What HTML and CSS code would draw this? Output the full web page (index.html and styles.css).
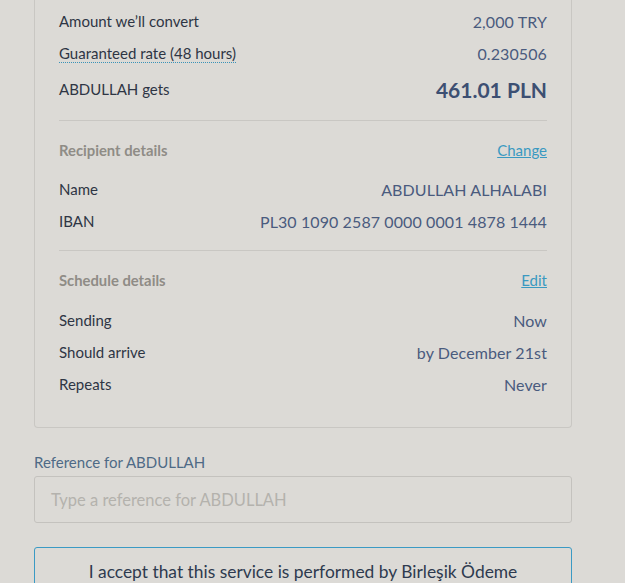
FILE: index.html
```html
<!DOCTYPE html>
<html>
<head>
<meta charset="utf-8">
<link rel="stylesheet" href="styles.css">
</head>
<body>
<div class="page">
  <div class="card">
    <div class="row"><span class="label">Amount we’ll convert</span><span class="value">2,000 TRY</span></div>
    <div class="row"><span class="label dotted">Guaranteed rate (48 hours)</span><span class="value">0.230506</span></div>
    <div class="row big"><span class="label">ABDULLAH gets</span><span class="value strong">461.01 PLN</span></div>
    <hr class="divider">
    <div class="row head"><span class="heading">Recipient details</span><a class="link" href="#">Change</a></div>
    <div class="row"><span class="label">Name</span><span class="value">ABDULLAH ALHALABI</span></div>
    <div class="row"><span class="label">IBAN</span><span class="value">PL30 1090 2587 0000 0001 4878 1444</span></div>
    <hr class="divider second">
    <div class="row head second"><span class="heading">Schedule details</span><a class="link" href="#">Edit</a></div>
    <div class="row"><span class="label">Sending</span><span class="value">Now</span></div>
    <div class="row"><span class="label">Should arrive</span><span class="value">by December 21st</span></div>
    <div class="row"><span class="label">Repeats</span><span class="value">Never</span></div>
  </div>
  <label class="ref-label">Reference for ABDULLAH</label>
  <div class="input"><span class="placeholder">Type a reference for ABDULLAH</span></div>
  <div class="accept">I accept that this service is performed by Birleşik Ödeme</div>
</div>
</body>
</html>
```
FILE: styles.css
```css
html, body {
  margin: 0;
  padding: 0;
  background: #dcdad6;
}
body {
  font-family: Lato, "Open Sans", sans-serif;
  color: #2e3544;
}
.page {
  width: 538px;
  margin-left: 34px;
}
.card {
  border: 1px solid #c9c7c3;
  border-top: 0;
  border-radius: 0 0 4px 4px;
  padding: 5px 24px 27px 24px;
}
.row {
  display: flex;
  justify-content: space-between;
  align-items: center;
  height: 32px;
  font-size: 15px;
}
.row.big {
  height: 40px;
}
.label {
  color: #2e3544;
}
.dotted {
  border-bottom: 1px dotted #3a93b8;
  line-height: 18px;
}
.value {
  color: #4a5b7e;
  font-size: 16px;
  letter-spacing: 0.1px;
}
.value.strong {
  font-size: 21px;
  font-weight: 700;
  color: #3d4f72;
  letter-spacing: 0;
}
.divider {
  border: 0;
  border-top: 1px solid #c9c7c3;
  margin: 11px 0 13px 0;
}
.divider.second {
  margin-top: 13px;
}
.row.head {
  margin-bottom: 7px;
}
.row.head.second {
  margin-bottom: 8px;
}
.heading {
  font-weight: 700;
  color: #8f8c86;
  font-size: 14.8px;
}
.link {
  color: #3a99c1;
  text-decoration: underline;
  font-size: 15px;
}
.ref-label {
  display: block;
  margin-top: 26px;
  font-size: 15px;
  color: #4e6a86;
  line-height: 16px;
}
.input {
  margin-top: 6px;
  height: 45px;
  border: 1px solid #c4c2be;
  border-radius: 3px;
  display: flex;
  align-items: center;
  padding-left: 16px;
}
.placeholder {
  color: #b4b2ad;
  font-size: 16.5px;
}
.accept {
  margin-top: 24px;
  border: 1px solid #3b9ac4;
  border-radius: 3px;
  text-align: center;
  font-size: 17.4px;
  color: #2e3a4f;
  padding-top: 13px;
  box-sizing: border-box;
  height: 60px;
}
```
